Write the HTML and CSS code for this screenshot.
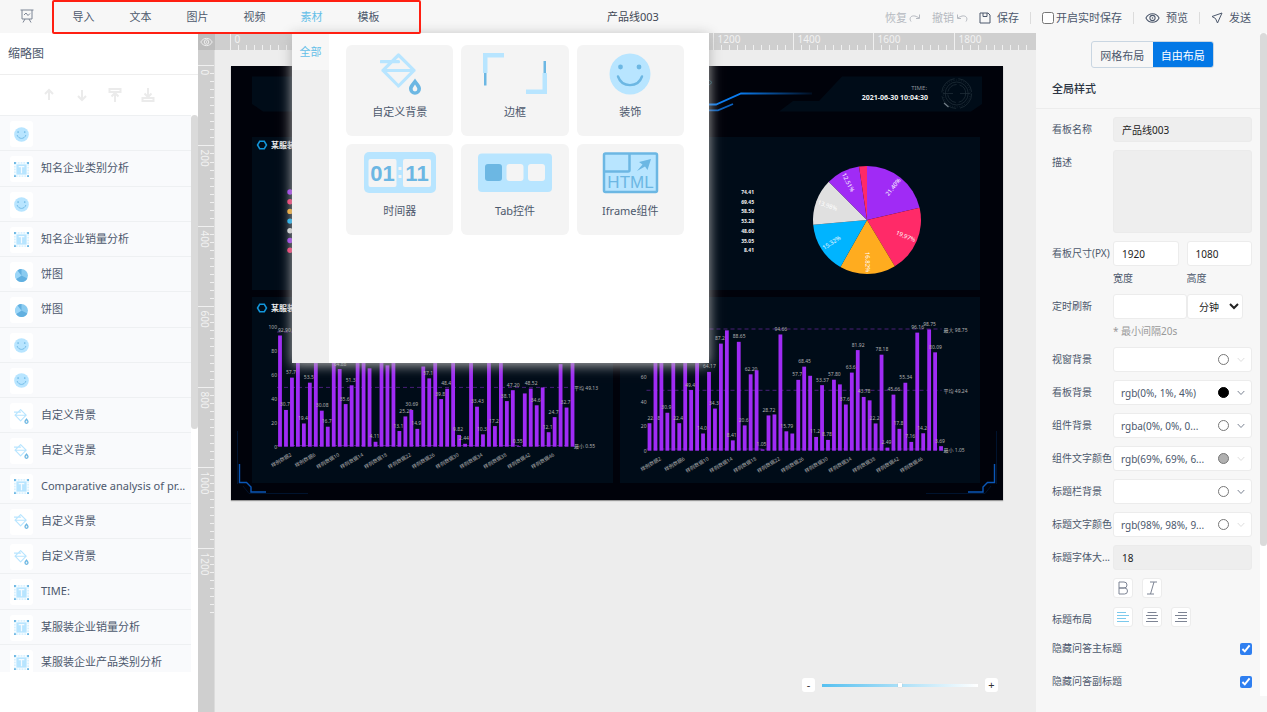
FILE: index.html
```html
<!DOCTYPE html>
<html lang="zh-CN">
<head>
<meta charset="utf-8">
<title>产品线003</title>
<link rel="stylesheet" href="styles.css">
</head>
<body>
<svg class="defs" aria-hidden="true">
  <symbol id="i-smile" viewBox="0 0 42 42">
    <circle cx="21" cy="21" r="20.5" fill="#b8e5ff"/>
    <circle cx="11.500" cy="14" r="2.400" fill="#6cb7e3"/><circle cx="30" cy="14" r="2.400" fill="#6cb7e3"/>
    <path d="M9 23.500C13 35 29 35 33 23.500" fill="none" stroke="#6cb7e3" stroke-width="2.400" stroke-linecap="round"/>
  </symbol>
  <symbol id="i-bucket" viewBox="0 0 42 42">
    <path d="M18.500 2 34 17.300 18.500 33 3 17.300ZM3 17.500H34M1 8.700H18.500" fill="none" stroke="#b8e5ff" stroke-width="3.200" stroke-linejoin="round" stroke-linecap="round"/>
    <path d="M35 25.500C37 29 41 32 41 35.700A6 6 0 0 1 29 35.700C29 32 33 29 35 25.500Z" fill="#6cb7e3"/>
    <path d="M35 31.500C36 33.500 37.400 34.500 37.400 36A2.400 2.400 0 0 1 32.600 36C32.600 34.500 34 33.500 35 31.500Z" fill="#f4f4f4"/>
  </symbol>
  <symbol id="i-text" viewBox="0 0 16 16">
    <path d="M1 1H15V15H1Z" fill="none" stroke="#b8e5ff" stroke-width="1" stroke-dasharray="2 1"/>
    <rect x="2.500" y="2.500" width="11" height="11" fill="#b8e5ff"/>
    <path d="M5 5H11M8 5V12" stroke="#f4faff" stroke-width="1.300"/>
    <path d="M0 0H2V2H0ZM14 0H16V2H14ZM0 14H2V16H0ZM14 14H16V16H14Z" fill="#6cb7e3"/>
  </symbol>
  <symbol id="i-pie" viewBox="0 0 14 14">
    <circle cx="7" cy="7" r="6" fill="#8acbf0"/>
    <path d="M7 7 1.900 10.200A6 6 0 0 0 12.400 9.700Z" fill="#62b0e0"/>
    <path d="M7 7 1.900 10.200A6 6 0 0 1 3.300 2.300Z" fill="#9bd6f8"/>
    <path d="M7 7 3.300 2.300A6 6 0 0 1 7 1Z" fill="#62b0e0"/>
  </symbol>
  <symbol id="i-eye" viewBox="0 0 16 12">
    <path d="M1 6C4 0 12 0 15 6C12 12 4 12 1 6Z" fill="none" stroke="currentColor" stroke-width="1.100"/>
    <circle cx="8" cy="6" r="2.800" fill="none" stroke="currentColor" stroke-width="1.100"/><circle cx="8" cy="6" r=".8" fill="currentColor"/>
  </symbol>
  <symbol id="i-chevron" viewBox="0 0 8 6"><path d="M.7 1 4 4.500 7.300 1" fill="none" stroke="currentColor" stroke-width="1"/></symbol>
</svg>

<header class="topbar">
  <svg class="brand" viewBox="0 0 14 14"><path d="M.5 1H13.500M2 1V10H12V1M4 6 6 4 8 6.500 10 4.500M5 10 3 13.500M9 10 11 13.500" fill="none" stroke="#7b8494" stroke-width="1"/></svg>
  <nav class="menu">
    <button>导入</button><button>文本</button><button>图片</button><button>视频</button><button class="active">素材</button><button>模板</button>
  </nav>
  <h1 class="doc-title">产品线003</h1>
  <div class="actions">
    <button class="muted">恢复<svg class="ic" viewBox="0 0 12 12"><path d="M2 9.500C-1 5 4 1.500 10 6M10.500 2.500V6.500H7" fill="none" stroke="currentColor"/></svg></button>
    <button class="muted">撤销<svg class="ic" viewBox="0 0 12 12"><path d="M10 9.500C13 5 8 1.500 2 6M1.500 2.500V6.500H5" fill="none" stroke="currentColor"/></svg></button>
    <button class="spaced"><svg class="ic" viewBox="0 0 12 12"><path d="M1 1H9L11 3V11H1ZM4 1V4.500H8V1" fill="none" stroke="currentColor"/></svg>保存</button>
    <i class="sep"></i>
    <label class="autosave"><input type="checkbox">开启实时保存</label>
    <i class="sep"></i>
    <button class="spaced"><svg class="ic eye" viewBox="0 0 16 12"><use href="#i-eye"/></svg>预览</button>
    <i class="sep"></i>
    <button class="spaced"><svg class="ic" viewBox="0 0 12 12"><path d="M11 1 1 4.500 4.500 6.500 6.500 11Z" fill="none" stroke="currentColor" stroke-linejoin="round"/></svg>发送</button>
  </div>

  <section class="flyout">
    <div class="flyout-tabs"><button>全部</button></div>
    <div class="flyout-grid">
      <button class="tile"><svg viewBox="0 0 80 42"><use href="#i-bucket" x="20" width="42" height="42"/></svg>自定义背景</button>
      <button class="tile"><svg viewBox="0 0 80 42"><path d="M8 0H29V4.500H12.500V20H8ZM51 36.500H67.500V20H72V41H51Z" fill="#b8e5ff"/><path d="M9 20H11.500V32.500H9ZM68.500 8H71V20H68.500Z" fill="#6cb7e3"/></svg>边框</button>
      <button class="tile"><svg viewBox="0 0 80 42"><use href="#i-smile" x="19" width="42" height="42"/></svg>装饰</button>
      <button class="tile"><svg viewBox="0 0 80 42"><rect x="4" width="72" height="41" rx="5" fill="#b8e5ff"/><rect x="8.500" y="7" width="28" height="28" rx="2" fill="#f4f4f4"/><rect x="43" y="7" width="28" height="28" rx="2" fill="#f4f4f4"/><path d="M38.500 15H41.500V18H38.500ZM38.500 23H41.500V26H38.500Z" fill="#f4f4f4"/><text class="flip" x="22.500" y="29">01</text><text class="flip" x="57" y="29">11</text></svg>时间器</button>
      <button class="tile"><svg viewBox="0 0 80 42"><rect x="3" y="1.500" width="74" height="38.500" rx="4" fill="#b8e5ff"/><rect x="10" y="12" width="17" height="17" rx="3" fill="#6cb7e3"/><rect x="31.500" y="12" width="17" height="17" rx="3" fill="#f4f4f4"/><rect x="53" y="12" width="17" height="17" rx="3" fill="#f4f4f4"/></svg>Tab控件</button>
      <button class="tile"><svg viewBox="0 0 80 42"><rect x="14" y="1.500" width="53" height="38.500" rx="1.500" fill="#b8e5ff" stroke="#6cb7e3" stroke-width="2.500"/><path d="M14 19.500H38Q39.500 19.500 39.500 18V2" fill="none" stroke="#6cb7e3" stroke-width="2.500"/><path d="M61 7 49 10 52.500 12.500 47 19 55 14.500 57.500 18Z" fill="#6cb7e3"/><text class="html-mark" x="40.500" y="36">HTML</text></svg>Iframe组件</button>
    </div>
  </section>
</header>

<main class="layout">
  <aside class="sidebar">
    <h2>缩略图</h2>
    <div class="order">
      <button aria-label="上移"><svg viewBox="0 0 14 14"><path d="M7 12V2M3 6 7 2 11 6"/></svg></button>
      <button aria-label="下移"><svg viewBox="0 0 14 14"><path d="M7 2V12M3 8 7 12 11 8"/></svg></button>
      <button aria-label="置顶"><svg viewBox="0 0 14 14"><path d="M1.500 1H12.500V4H1.500ZM7 14V5M3.500 8.500 7 5 10.500 8.500"/></svg></button>
      <button aria-label="置底"><svg viewBox="0 0 14 14"><path d="M1.500 10H12.500V13H1.500ZM7 0V9M3.500 5.500 7 9 10.500 5.500"/></svg></button>
    </div>
    <div class="layers">
      <ul id="layers"></ul>
      <i class="thumb"></i>
    </div>
  </aside>

  <section class="stage">
    <div class="corner"><svg viewBox="0 0 16 12"><use href="#i-eye"/></svg></div>
    <svg class="ruler-x" id="rulerX"></svg>
    <svg class="ruler-y" id="rulerY"></svg>
    <div class="workspace">
      <svg class="board" id="board" viewBox="0 0 772 434">
        <defs>
          <linearGradient id="fade"><stop offset="0" stop-color="#0a7cf0"/><stop offset=".4" stop-color="#0a7cf0"/><stop offset="1" stop-color="#0a7cf0" stop-opacity=".1"/></linearGradient>
        </defs>
        <rect width="772" height="434" fill="#00020a"/>
        <g fill="#000c18">
          <path d="M611 10.500H751V38L740 45.500H548L562 35H588Z"/>
          <path d="M161 10.500H21V38L32 45.500H224L210 35H184Z"/>
          <rect x="21" y="71" width="361" height="153"/><rect x="389" y="71" width="360" height="153"/>
          <rect x="21" y="231" width="361" height="186"/><rect x="389" y="231" width="360" height="186"/>
        </g>
        <g fill="none">
          <path d="M460 38.500H485L510 27.500H581" stroke="url(#fade)" stroke-width="1.800"/>
          <path d="M460 44.300H487L502 38" stroke="#0a62c0" stroke-width="1.800"/>
          <path d="M478 14 481 16.500 478 19" stroke="#134a58"/>
          <g stroke="#0a57b8" stroke-width="1.400"><path id="bracket" d="M8.500 398V416.500H15.500L20 421V426H35"/><use href="#bracket" transform="translate(772)scale(-1 1)"/></g>
          <g stroke="#00132e"><path id="trace" d="M6.500 365V418M12 420 18 427.500H77"/><use href="#trace" transform="translate(772)scale(-1 1)"/></g>
          <g stroke="#22313b" stroke-width=".7"><circle cx="725.700" cy="27.500" r="11.500"/><circle cx="725.700" cy="27.500" r="9" stroke-dasharray="12 3"/><circle cx="725.700" cy="27.500" r="15" stroke-dasharray="20 4"/><circle cx="725.700" cy="27.500" r="13.500" stroke-dasharray="1 1.500"/><path d="M712 27.500H722M729 27.500H739"/></g>
          <path d="M713 37 717.500 41" stroke="#74808a" stroke-width="1.200"/>
          <g stroke="#1296db" stroke-width="1.500"><path id="hex" d="M28.700 75.300H33.300L35.500 79 33.300 82.700H28.700L26.500 79Z"/><use href="#hex" y="163"/></g>
        </g>
        <text class="b-title" x="40" y="82">某服装企业产品类别分析</text>
        <text class="b-title" x="40" y="245">某服装企业销量分析</text>
        <text class="b-time" x="696" y="24">TIME:</text>
        <text class="b-date" x="697" y="34">2021-06-30 10:04:30</text>
      </svg>
    </div>
    <div class="zoom">
      <button aria-label="缩小">-</button>
      <input type="range" min="0" max="100" value="50" aria-label="缩放">
      <button aria-label="放大">+</button>
    </div>
  </section>

  <aside class="inspector">
    <form class="panel">
      <div class="switch"><button type="button">网格布局</button><button type="button" class="on">自由布局</button></div>
      <h2>全局样式</h2>
      <div class="fields">
        <div class="row"><label for="name">看板名称</label><input id="name" class="grey" value="产品线003"></div>
        <div class="row"><label for="desc">描述</label><textarea id="desc" class="grey"></textarea></div>
        <div class="row"><label for="w">看板尺寸(PX)</label><div class="pair">
          <input id="w" value="1920"><input id="h" value="1080"><label class="note" for="w">宽度</label><label class="note" for="h">高度</label></div></div>
        <div class="row"><label for="every">定时刷新</label><div class="refresh"><input id="every"><select aria-label="单位"><option>分钟</option></select><span class="hint">* 最小间隔20s</span></div></div>
        <div class="row"><label for="c1">视窗背景</label><div class="color dim"><input id="c1"><i class="dot"></i><svg viewBox="0 0 8 6"><use href="#i-chevron"/></svg></div></div>
        <div class="row"><label for="c2">看板背景</label><div class="color"><input id="c2" value="rgb(0%, 1%, 4%)"><i class="dot black"></i><svg viewBox="0 0 8 6"><use href="#i-chevron"/></svg></div></div>
        <div class="row"><label for="c3">组件背景</label><div class="color"><input id="c3" value="rgba(0%, 0%, 0..."><i class="dot"></i><svg viewBox="0 0 8 6"><use href="#i-chevron"/></svg></div></div>
        <div class="row"><label for="c4">组件文字颜色</label><div class="color dim"><input id="c4" value="rgb(69%, 69%, 6..."><i class="dot silver"></i><svg viewBox="0 0 8 6"><use href="#i-chevron"/></svg></div></div>
        <div class="row"><label for="c5">标题栏背景</label><div class="color"><input id="c5"><i class="dot"></i><svg viewBox="0 0 8 6"><use href="#i-chevron"/></svg></div></div>
        <div class="row"><label for="c6">标题文字颜色</label><div class="color dim"><input id="c6" value="rgb(98%, 98%, 9..."><i class="dot"></i><svg viewBox="0 0 8 6"><use href="#i-chevron"/></svg></div></div>
        <div class="row"><label for="fs">标题字体大...</label><input id="fs" class="grey" value="18"></div>
        <div class="row"><span class="cap"></span><div class="tools">
          <button type="button" aria-label="加粗"><svg viewBox="0 0 14 14"><path d="M3 1H8A3 3 0 0 1 8 7H3ZM3 7H8.500A3 3 0 0 1 8.500 13H3Z"/></svg></button>
          <button type="button" aria-label="斜体"><svg viewBox="0 0 14 14"><path d="M5 1H12M2 13H9M9 1 5.500 13"/></svg></button></div></div>
        <div class="row"><span class="cap">标题布局</span><div class="tools">
          <button type="button" class="on" aria-label="左对齐"><svg viewBox="0 0 14 14"><path d="M1 2.500H10M1 5.500H13M1 8.500H10M1 11.500H13"/></svg></button>
          <button type="button" aria-label="居中"><svg viewBox="0 0 14 14"><path d="M2.500 2.500H11.500M1 5.500H13M2.500 8.500H11.500M1 11.500H13"/></svg></button>
          <button type="button" aria-label="右对齐"><svg viewBox="0 0 14 14"><path d="M4 2.500H13M1 5.500H13M4 8.500H13M1 11.500H13"/></svg></button></div></div>
        <div class="row check"><label for="k1">隐藏问答主标题</label><input id="k1" type="checkbox" checked></div>
        <div class="row check"><label for="k2">隐藏问答副标题</label><input id="k2" type="checkbox" checked></div>
      </div>
    </form>
    <div class="scroll"><i></i></div>
  </aside>
</main>
<script src="script.js"></script>
</body>
</html>
```
FILE: styles.css
```css
* { box-sizing: border-box; }
body {
  margin: 0; height: 100vh; display: flex; flex-direction: column; overflow: hidden;
  font: 11px/16px "Noto Sans", "Noto Sans CJK SC", sans-serif; color: #4c586c; background: #ededed;
}
button, input, select, textarea { font: inherit; color: inherit; margin: 0; }
button { border: 0; padding: 0; background: none; }
h1, h2, ul { margin: 0; padding: 0; font-size: inherit; font-weight: 400; list-style: none; }
.defs { position: absolute; width: 0; height: 0; }

/* top bar */
.topbar { position: relative; z-index: 2; display: flex; height: 33px; flex: none; background: #f7f7f7; }
.brand { width: 14px; height: 14px; margin: 9px 18px 0 20px; }
.menu { display: flex; height: 34px; padding: 0 22px 0 1px; border: 2px solid #ff1f12; border-radius: 2px; position: relative; z-index: 2; }
.menu button { width: 57px; }
.menu .active, .flyout-tabs button { color: #65bfe8; }
.doc-title { flex: 1; padding: 9px 0 0 186px; color: #3f4754; }
.actions { display: flex; align-items: center; padding: 3px 16px 0 0; gap: 11px; }
.actions button { display: flex; align-items: center; gap: 2px; }
.actions .spaced { gap: 6px; }
.actions .muted { color: #b5b9c0; }
.ic { width: 12px; height: 12px; }
.ic.eye { width: 15px; }
.sep { width: 1px; height: 12px; background: #dcdcdc; }
.autosave { display: flex; align-items: center; gap: 2px; }
.autosave input { width: 12px; height: 12px; }

/* material flyout */
.flyout { position: absolute; left: 292px; top: 33px; width: 417px; height: 330px; display: flex; background: #fff; box-shadow: 0 2px 12px #b4b4b4; }
.flyout-tabs { width: 37px; background: #efefef; }
.flyout-tabs button { width: 100%; height: 37px; background: #f7f7f7; }
.flyout-grid { flex: 1; display: grid; grid-template-columns: repeat(3, 1fr); grid-auto-rows: 91px; gap: 8px; padding: 12px 25px 0 17px; }
.tile { display: flex; flex-direction: column; align-items: center; gap: 9px; padding-top: 8px; border-radius: 6px; background: #f4f4f4; }
.tile svg { width: 80px; height: 42px; }
.flip { font: 700 22px "Liberation Sans Narrow", "Liberation Sans", sans-serif; fill: #6cb7e3; text-anchor: middle; }
.html-mark { font: 17px "Liberation Sans", sans-serif; fill: #6cb7e3; text-anchor: middle; }

.layout { flex: 1; display: flex; min-height: 0; }

/* layer list */
.sidebar { width: 198px; flex: none; background: #fff; }
.sidebar h2 { height: 42px; padding: 13px 8px 0; font-size: 12px; border-bottom: 1px solid #eee; }
.order { display: flex; gap: 19px; height: 40px; padding-left: 42px; align-items: center; }
.order svg { display: block; width: 14px; height: 14px; fill: none; stroke: #ebebeb; stroke-width: 2; }
.layers { height: 557px; display: flex; overflow: hidden; }
.layers ul { flex: 1; height: 564px; display: grid; grid-template-rows: repeat(16, 1fr); min-width: 0; }
.layers li { display: flex; align-items: center; gap: 8px; padding-left: 10px; background: #f9fafc; border-top: 1px solid #eef0f2; }
.layers li > span { display: grid; place-items: center; width: 23px; height: 26px; border-radius: 3px; background: #fff; margin-top: 2px; }
.layers svg { width: 15px; height: 15px; }
.thumb { width: 7px; height: 314px; border-radius: 4px; background: #dadada; }

/* stage */
.stage { position: relative; flex: 1; min-width: 0; display: grid; grid-template: 17px 1fr / 17px 1fr; }
.corner { background: #bdbdbd; display: grid; place-items: center; color: #f4f4f4; }
.corner svg { width: 13px; height: 10px; }
.ruler-x, .ruler-y { width: 100%; height: 100%; background: #cfcfcf; }
.ruler-y { border-right: 1px solid #dcdcdc; }
.ruler-x text, .ruler-y text { font-size: 10px; fill: #f2f2f2; }
.ruler-x path, .ruler-y path { stroke: #f0f0f0; }
.workspace { padding: 16px 33px 0 16px; }
.board { display: block; width: 100%; box-shadow: 0 1px 1px #999; }
.board text { font-size: 5px; fill: #b0b0b0; }
.board .b-title { font-size: 8px; font-weight: 600; fill: #eee; }
.board .b-time { font-size: 6px; fill: #8b9299; text-anchor: end; }
.board .b-date { font-size: 7px; font-weight: 700; fill: #f2f2f2; text-anchor: end; }
.board .b-value { font-weight: 700; fill: #f2f2f2; text-anchor: end; }
.board .b-end { text-anchor: end; }
.board .b-slice { font-size: 6px; fill: #fff; text-anchor: middle; }
.zoom { position: absolute; right: 38px; bottom: 20px; display: flex; align-items: center; gap: 7px; }
.zoom button { width: 13px; height: 14px; line-height: 12px; border-radius: 3px; background: #fff; color: #333; }
.zoom input { appearance: none; width: 156px; height: 3px; background: linear-gradient(90deg, #56c0f0, #fff); }
.zoom input::-webkit-slider-thumb { appearance: none; width: 4px; height: 4px; background: #fff; box-shadow: 0 0 1px #999; }

/* inspector */
.inspector { width: 231px; flex: none; display: flex; background: #f7f7f7; font-size: 10px; }
.panel { flex: 1; min-width: 0; }
.switch { display: flex; width: 123px; margin: 8px 0 0 55px; border: 1px solid #c9d6e2; border-radius: 3px; overflow: hidden; font-size: 11px; }
.switch button { flex: 1; height: 25px; padding-top: 2px; }
.switch .on { background: #0378e6; color: #fff; }
.panel h2 { padding: 13px 16px 11px; font-size: 11px; font-weight: 500; color: #2b3443; border-bottom: 1px solid #ececec; }
.fields { display: flex; flex-direction: column; gap: 8px; padding: 8px 8px 0 16px; }
.row { display: flex; }
.row > label, .row > span { width: 61px; flex: none; line-height: 25px; white-space: nowrap; }
.row > input, .row > textarea, .row > div { flex: 1; min-width: 0; }
.row input, .row select, .row textarea { height: 25px; min-width: 0; border: 1px solid #ececec; border-radius: 3px; background: #fff; padding: 0 8px; color: #222; }
.row .grey { background: #eee; border-color: #ebebeb; }
.row textarea { height: 83px; resize: none; display: block; }
.row select { padding: 0 0 0 7px; }
.pair { display: grid; grid-template-columns: 1fr 1fr; column-gap: 8px; }
.note, .hint { height: 20px; padding-top: 4px; }
.refresh { display: grid; grid-template-columns: 74px 56px; }
.hint { color: #999; grid-column: 1 / 3; }
.row .color { display: flex; align-items: center; height: 25px; padding-right: 6px; border: 1px solid #ececec; border-radius: 3px; background: #fff; color: #7a8392; }
.row .color input { flex: 1; height: 20px; border: 0; padding: 0 0 0 7px; background: none; color: #4c586c; }
.color svg { width: 8px; height: 6px; margin-left: 8px; }
.color.dim svg { color: #ddd; }
.dot { width: 11px; height: 11px; border: 1px solid #777; border-radius: 50%; }
.dot.black { background: #000; border-color: #000; }
.dot.silver { background: #b0b0b0; }
.tools { display: flex; gap: 9px; height: 21px; }
.tools button { width: 20px; height: 20px; border: 1px solid #ececec; border-radius: 3px; background: #fff; display: grid; place-items: center; }
.tools svg { width: 14px; height: 14px; fill: none; stroke: #7d8494; }
.tools .on svg { stroke: #7cc9ec; }
.row > .cap { height: 20px; }
.row.check { justify-content: space-between; height: 25px; align-items: center; }
.row.check > label { width: auto; }
.row.check input { flex: none; width: 12px; height: 12px; accent-color: #2f7ff0; }
.scroll { width: 7px; height: 663px; background: #fff; }
.scroll i { display: block; height: 513px; border-radius: 4px; background: #dadada; }
```
FILE: script.js
```js
const NS = 'http://www.w3.org/2000/svg';
function add(parent, tag, attrs, text) {
  const el = document.createElementNS(NS, tag);
  for (const k in attrs) el.setAttribute(k, attrs[k]);
  if (text !== undefined) el.textContent = text;
  parent.appendChild(el);
  return el;
}

/* layer list */
const layers = [
  ['smile', ''], ['text', '知名企业类别分析'], ['smile', ''], ['text', '知名企业销量分析'],
  ['pie', '饼图'], ['pie', '饼图'], ['smile', ''], ['smile', ''],
  ['bucket', '自定义背景'], ['bucket', '自定义背景'], ['text', 'Comparative analysis of pr...'],
  ['bucket', '自定义背景'], ['bucket', '自定义背景'], ['text', 'TIME:'],
  ['text', '某服装企业销量分析'], ['text', '某服装企业产品类别分析']
];
document.getElementById('layers').innerHTML = layers.map(([icon, name]) =>
  `<li><span><svg><use href="#i-${icon}"/></svg></span>${name}</li>`).join('');

/* rulers: 20 board units per tick */
const SCALE = 772 / 1920;
const rx = document.getElementById('rulerX');
const ry = document.getElementById('rulerY');
for (let u = 0; u < 2000; u += 20) {
  const p = Math.round(15 + u * SCALE) + 0.5;
  const major = u % 200 === 0;
  add(rx, 'path', { d: `M${p} ${major ? 0 : 12}V17` });
  if (major) add(rx, 'text', { x: p + 4, y: 10 }, u);
  if (u > 1360) continue;
  add(ry, 'path', { d: `M${major ? 0 : 12} ${p}H17` });
  if (major) add(ry, 'text', { transform: `translate(3 ${p + 4}) rotate(90)` }, u);
}

/* board charts */
const board = document.getElementById('board');

['#a02bf5', '#ff2a68', '#ffac1f', '#00b4ff', '#e0e0e0', '#a02bf5', '#ff2a68'].forEach((c, i) =>
  add(board, 'circle', { cx: 59, cy: 126 + i * 9.7, r: 2.7, fill: c }));
['74.41', '69.45', '58.50', '53.28', '48.60', '35.05', '8.41'].forEach((v, i) =>
  add(board, 'text', { class: 'b-value', x: 523, y: 128 + i * 9.7 }, v));

const slices = [
  [77, '#a02bf5', '21.40%', -52], [149, '#ff2a68', '19.97%', 23], [209.5, '#ffac1f', '16.82%', 89],
  [265, '#00b4ff', '15.32%', -33], [315, '#e0e0e0', '13.98%', 20], [351.5, '#a02bf5', '12.51%', 63], [360, '#ff2a68', '', 0]
];
const at = (deg, r) => {
  const a = deg * Math.PI / 180;
  return [636 + r * Math.sin(a), 154 - r * Math.cos(a)];
};
let from = 0;
for (const [to, fill, label, turn] of slices) {
  add(board, 'path', { d: `M636 154L${at(from, 54)}A54 54 0 0 1 ${at(to, 54)}Z`, fill });
  if (label) {
    const [x, y] = at((from + to) / 2, 42);
    add(board, 'text', { class: 'b-slice', transform: `translate(${x} ${y}) rotate(${turn})`, dy: 2 }, label);
  }
  from = to;
}

/* bars marked with "!" carry no value label */
function chart(o) {
  const y = v => o.base - v * o.unit;
  for (let v = 0; v <= 100; v += 20)
    add(board, 'text', { class: 'b-end', x: o.x - 3, y: y(v) + 2 }, v);
  for (const m of o.marks) {
    add(board, 'path', { d: `M${o.x - 3} ${m[1]}H${o.x + 292}`, stroke: '#5a2490', 'stroke-width': 0.8, 'stroke-dasharray': '4 3' });
    add(board, 'text', { x: o.x + 294, y: m[1] + 2.5 }, m[0]);
  }
  o.bars.split(' ').forEach((b, i) => {
    const shown = !b.endsWith('!');
    const v = parseFloat(b);
    const cx = o.x + i * o.step;
    if (shown) add(board, 'text', { x: Math.max(cx - 6, o.x - 2), y: y(v) - 3.5 }, b);
    add(board, 'rect', { x: cx - 1.9, y: y(v), width: 3.8, height: v * o.unit, fill: '#a02bf5' });
  });
  for (let k = 0; k < 12; k++)
    add(board, 'text', { class: 'b-end', transform: `translate(${o.x + 12 + k * o.step * 4} ${o.base + 9}) rotate(-31)` }, '样例数据' + (2 + 4 * k));
}
chart({
  x: 49, step: 5.97, base: 380.7, unit: 1.197,
  marks: [['最大 92.90', 266], ['平均 49.13', 321.4], ['最小 0.55', 379.5]],
  bars: '92.90 30.7 57.7 93! 19.4 53.5 85! 30.08 16.7 80! 64.88 35.6 51.3 75! 77! 65.5! 4.11 90! 68! 88! 13.1 25.28 30.69 14.9 67! 57.1 82! 39.8 48.4 90! 9.82 2.44 85! 33.43 10.3 80! 17.2 85! 38.1 47.20 0.55 44.5! 48.52 34.6 49.5! 12.1 24.7 69! 32.7 90!'
});
chart({
  x: 418.5, step: 5.95, base: 384.7, unit: 1.228,
  marks: [['最大 98.75', 263], ['平均 49.24', 324.3], ['最小 1.05', 383]],
  bars: '22.38 85! 80! 30.9 90! 22.4 85! 49.4 80! 14.0 64.17 34.3 87.2 98! 8.41 88.65 20.6 62.20 65.5! 1.05 28.72 29.5! 94.66 15.79 14! 57.7 68.45 61! 11.2 53.37 8.78 57.80 54! 37.6 63.6 81.92 43.78 41! 22.2 78.18 2.49 45.66 17.8 55.34 7.16 96.16 14.2 98.75 80.09 3.69'
});
```
